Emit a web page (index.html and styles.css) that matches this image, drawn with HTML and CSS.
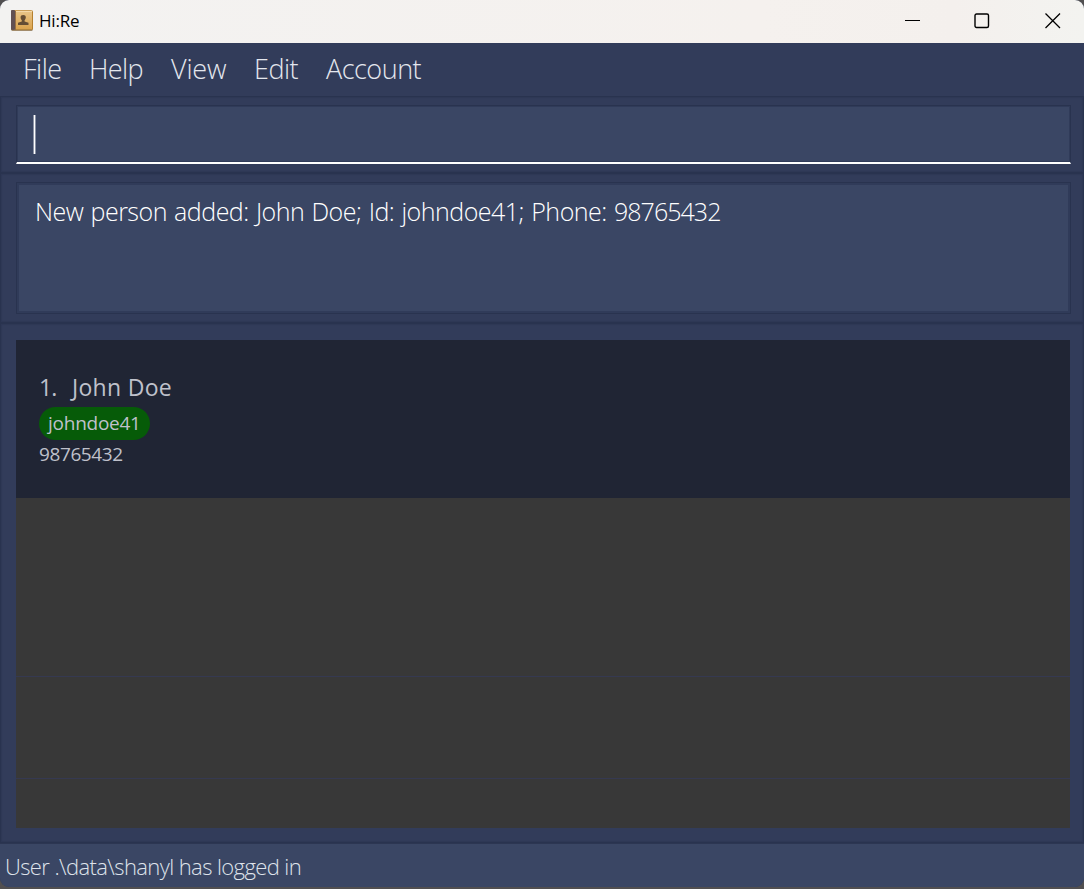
FILE: index.html
```html
<!DOCTYPE html>
<html lang="en">
<head>
<meta charset="utf-8">
<title>Hi:Re</title>
<link rel="stylesheet" href="styles.css">
</head>
<body>
<div class="window">
  <header class="titlebar">
    <svg class="app-icon" width="22" height="21" viewBox="0 0 22 21">
      <defs><linearGradient id="cover" x1="0" y1="0" x2="0" y2="1"><stop offset="0" stop-color="#e8c58a"/><stop offset="1" stop-color="#dba24b"/></linearGradient></defs>
      <rect x="0.5" y="0.5" width="21" height="19.5" rx="1" fill="url(#cover)" stroke="#b5802f"/>
      <path d="M2 1.2H21" stroke="#f9e3b8"/>
      <rect x="0" y="0" width="4" height="20" rx="1" fill="#625052"/>
      <path d="M4.5 1V20" stroke="#997044"/>
      <path d="M0.5 20.2H21.5" stroke="#79664f" stroke-width=".8"/>
      <path d="M7 15V12.8L10.8 11.4V10.2C9.9 9.5 9.6 8.4 9.6 7.3C9.6 5.8 10.6 5 12.2 5S14.8 5.8 14.8 7.3C14.8 8.4 14.4 9.5 13.6 10.2V11.4L17.5 12.8V15Z" fill="#654d34"/>
    </svg>
    <span class="title">Hi:Re</span>
    <div class="controls">
      <svg width="16" height="16" viewBox="0 0 16 16"><path d="M0 7.5H15" stroke="#000"/></svg>
      <svg width="16" height="16" viewBox="0 0 16 16"><rect x="1" y="1" width="13.5" height="13.5" rx="1.5" fill="none" stroke="#000" stroke-width="1.4"/></svg>
      <svg width="16" height="16" viewBox="0 0 16 16"><path d="M.5 .5L15 15M15 .5L.5 15" stroke="#000" stroke-width="1.3"/></svg>
    </div>
  </header>
  <nav class="menubar">
    <span class="menu file">File</span>
    <span class="menu help">Help</span>
    <span class="menu view">View</span>
    <span class="menu edit">Edit</span>
    <span class="menu account">Account</span>
  </nav>
  <section class="pane command"><div class="command-box"><span class="caret"></span></div></section>
  <section class="pane result"><div class="result-box"><span class="message">New person added: John Doe; Id: johndoe41; Phone: <span class="number">98765432</span></span></div></section>
  <main class="pane list-pane">
    <div class="list">
      <article class="card">
        <div class="name"><span class="index">1.</span><span class="fullname">John Doe</span></div>
        <div class="tag"><span class="tag-text">johndoe41</span></div>
        <div class="phone">98765432</div>
      </article>
      <div class="row first"></div>
      <div class="row second"></div>
      <div class="row"></div>
    </div>
  </main>
  <footer class="status"><span class="status-text">User .\data\shanyl has logged in</span></footer>
</div>
</body>
</html>
```
FILE: styles.css
```css
* { box-sizing: border-box; }
body { margin: 0; background: #514f50; font-family: "Open Sans", "Noto Sans", sans-serif; }
.window { display: flex; flex-direction: column; width: 1084px; height: 887px; background: #323c5a; border-radius: 9px; overflow: hidden; }
span { white-space: nowrap; }
.titlebar { display: flex; align-items: center; flex: none; height: 43px; padding: 0 23px 2px 11px; background: linear-gradient(90deg, #f3f2f1, #f5f1ee 70%, #f4f0ed 88%, #f3f3f0); }
.title { margin-left: 6px; font-size: 17px; letter-spacing: -.2px; color: #000; }
.controls { display: flex; margin-left: auto; gap: 55px; }
.controls svg:first-child { margin-right: -2px; }
.app-icon { display: block; }
.menubar { display: flex; flex: none; height: 53px; padding-left: 23px; color: #e4e7ee; font-size: 27px; font-weight: 300; line-height: 52px; }
.menu { letter-spacing: -.5px; }
.file { width: 66px; }
.help { width: 82px; letter-spacing: -.6px; }
.view { width: 83px; letter-spacing: -.2px; }
.edit { width: 72px; }
.pane { flex: none; border: 1px solid #29334f; box-shadow: inset 0 0 1px 1px #2e3855; }
.command { height: 77px; padding: 8px 12px 0 15px; }
.command-box { display: flex; height: 59px; padding: 9px 0 0 16px; background: #3a4664; border: 1px solid #29334f; border-bottom: 2px solid #fff; box-shadow: inset 0 0 0 1px #303b59; }
.caret { width: 3px; height: 39px; background: linear-gradient(90deg, #8c93a5 1px, #fff 1px 2px, #8c93a5 2px); }
.result { height: 150px; padding: 8px 12px 0 15px; }
.result-box { height: 132px; padding: 10px 0 0 18px; background: #3a4664; border: 1px solid #29334f; box-shadow: inset 0 0 0 2px #303b59; color: #fff; font-size: 25px; font-weight: 300; line-height: 36px; }
.message { letter-spacing: -.5px; word-spacing: 1.2px; }
.number { letter-spacing: -.95px; }
.list-pane { height: 520px; padding: 16px 13px 0 15px; }
.list { display: flex; flex-direction: column; height: 488px; background: #383838; }
.card { height: 158px; padding: 30px 0 0 23px; background: #202534; color: #bfc1cb; }
.name { display: flex; height: 34px; line-height: 34px; font-size: 23px; }
.index { width: 33px; letter-spacing: -1px; }
.fullname { letter-spacing: .3px; }
.tag { display: flex; width: 111px; height: 33px; margin-top: 3px; padding-left: 9px; border-radius: 17px; background: #065b08; line-height: 32px; font-size: 19px; }
.tag-text { letter-spacing: -.25px; }
.phone { line-height: 28px; font-size: 19px; letter-spacing: -.4px; }
.row { flex: 1; }
.first { flex: none; height: 179px; border-bottom: 1px solid #353951; }
.second { flex: none; height: 102px; border-bottom: 1px solid #353951; }
.status { flex: 1; padding-left: 5px; background: #3a4664; border-top: 1px solid #2c3652; color: #dfe3eb; font-size: 22px; font-weight: 300; line-height: 45px; }
.status-text { letter-spacing: -.6px; }
```
